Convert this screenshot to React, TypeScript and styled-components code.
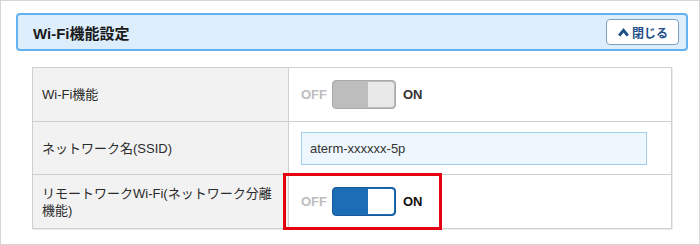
import styled, { createGlobalStyle } from 'styled-components';

const GlobalStyle = createGlobalStyle`
  body {
    margin: 0;
    background: #fff;
    font-family: "Liberation Sans", "Noto Sans CJK JP", sans-serif;
    color: #333;
  }
`;

function ChevronUp() {
  return (
    <svg width="11" height="9" viewBox="0 0 11 9">
      <polyline
        points="1.2,7.6 5.5,2.4 9.8,7.6"
        fill="none"
        stroke="#1d4e87"
        strokeWidth="3"
      />
    </svg>
  );
}

function Toggle({ on }: { on: boolean }) {
  return (
    <ToggleWrap>
      <OffText>OFF</OffText>
      <Track $on={on}>
        <Thumb $on={on} />
      </Track>
      <OnText $on={on}>ON</OnText>
    </ToggleWrap>
  );
}

function App() {
  return (
    <>
      <GlobalStyle />
      <Frame>
        <Header>
          <Title>Wi-Fi機能設定</Title>
          <CloseButton>
            <ChevronUp />
            閉じる
          </CloseButton>
        </Header>
        <Table>
          <Row $h={53}>
            <Label>Wi-Fi機能</Label>
            <Value>
              <Toggle on={false} />
            </Value>
          </Row>
          <Row $h={52}>
            <Label>ネットワーク名(SSID)</Label>
            <Value>
              <TextInput defaultValue="aterm-xxxxxx-5p" />
            </Value>
          </Row>
          <Row $h={53} $last>
            <Label>リモートワークWi-Fi(ネットワーク分離機能)</Label>
            <Value>
              <Toggle on={true} />
              <Highlight />
            </Value>
          </Row>
        </Table>
      </Frame>
    </>
  );
}

const Frame = styled.div`
  width: 700px;
  height: 245px;
  box-sizing: border-box;
  border: 1px solid #d6d6d6;
  padding: 12px 11px 0 15px;
`;

const Header = styled.div`
  height: 38px;
  box-sizing: border-box;
  border: 2px solid #66b2f0;
  border-radius: 4px;
  background: #dcedfc;
  display: flex;
  align-items: center;
  justify-content: space-between;
  padding: 0 7px 0 15px;
`;

const Title = styled.h2`
  margin: 0;
  font-size: 15px;
  font-weight: bold;
  color: #1a1a1a;
`;

const CloseButton = styled.button`
  width: 73px;
  height: 26px;
  box-sizing: border-box;
  border: 1px solid #7f9fc2;
  border-radius: 4px;
  background: #fff;
  display: flex;
  align-items: center;
  justify-content: center;
  gap: 3px;
  padding: 0 0 0 1px;
  font-family: inherit;
  font-size: 12px;
  font-weight: bold;
  color: #1d4e87;
`;

const Table = styled.div`
  margin: 16px 16px 0 16px;
  border: 1px solid #cfcfcf;
  box-shadow: 1px 1px 0 #ececec;
`;

const Row = styled.div<{ $h: number; $last?: boolean }>`
  display: grid;
  grid-template-columns: 256px 1fr;
  height: ${(p) => p.$h}px;
  border-bottom: ${(p) => (p.$last ? 'none' : '1px solid #cfcfcf')};
`;

const Label = styled.div`
  box-sizing: border-box;
  background: #f2f2f2;
  border-right: 1px solid #cfcfcf;
  padding: 0 10px 0 9px;
  display: flex;
  align-items: center;
  font-size: 13px;
  line-height: 17px;
  color: #2b2b2b;
`;

const Value = styled.div`
  position: relative;
  display: flex;
  align-items: center;
  padding-left: 12px;
`;

const ToggleWrap = styled.div`
  display: flex;
  align-items: center;
`;

const OffText = styled.span`
  font-size: 13px;
  font-weight: bold;
  color: #bdbdbd;
  width: 31px;
`;

const Track = styled.div<{ $on: boolean }>`
  width: 64px;
  height: 29px;
  box-sizing: border-box;
  border: 1px solid ${(p) => (p.$on ? '#165a9c' : '#a9a9a9')};
  border-radius: 4px;
  background: ${(p) => (p.$on ? '#1c6db5' : '#bdbdbd')};
  display: flex;
  justify-content: flex-end;
  padding: 1px;
`;

const Thumb = styled.div<{ $on: boolean }>`
  width: 26px;
  height: 100%;
  border-radius: 0 3px 3px 0;
  background: ${(p) => (p.$on ? '#fff' : '#e9e9e9')};
`;

const OnText = styled.span<{ $on: boolean }>`
  margin-left: 7px;
  font-size: 13px;
  font-weight: bold;
  color: ${(p) => (p.$on ? '#111' : '#333')};
`;

const TextInput = styled.input`
  width: 346px;
  height: 33px;
  box-sizing: border-box;
  border: 1px solid #9fcfef;
  background: #eef7fd;
  padding: 0 8px;
  font-family: inherit;
  font-size: 13px;
  color: #333;
  outline: none;
`;

const Highlight = styled.div`
  position: absolute;
  left: -6px;
  top: -2px;
  width: 159px;
  height: 57px;
  box-sizing: border-box;
  border: 3px solid #e60012;
  pointer-events: none;
`;

export default App;
